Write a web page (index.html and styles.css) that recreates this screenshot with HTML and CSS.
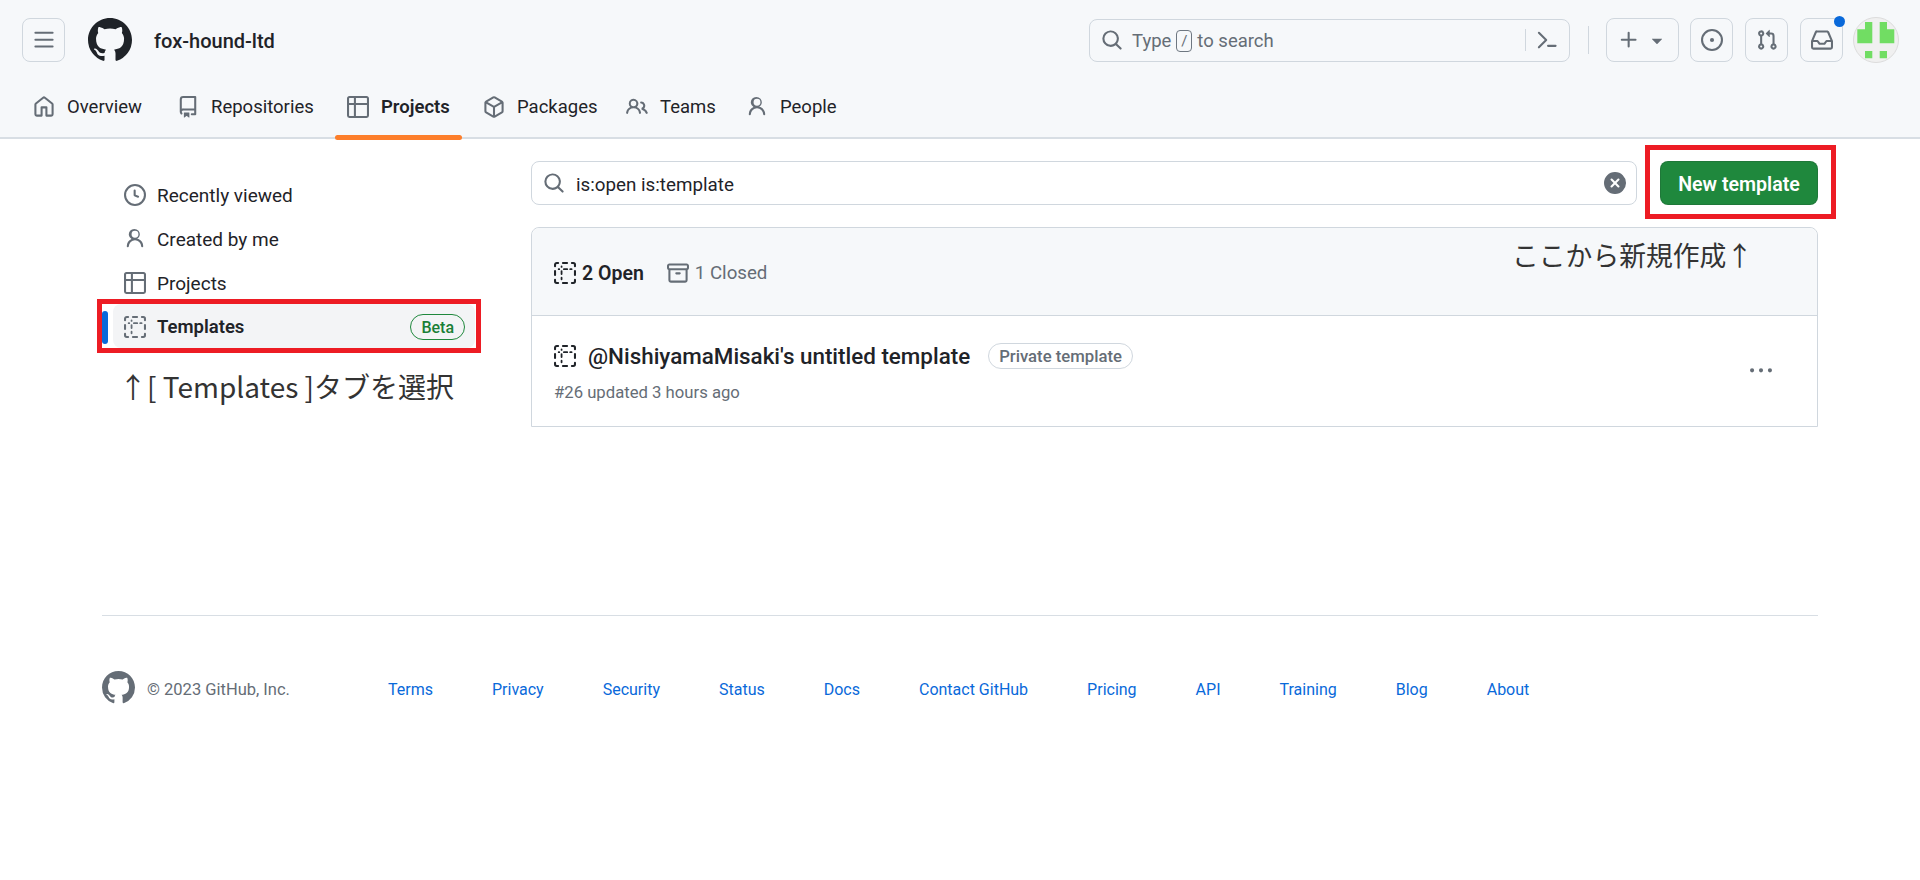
FILE: index.html
```html
<!DOCTYPE html>
<html lang="en">
<head>
<meta charset="utf-8">
<title>Projects · fox-hound-ltd</title>
<link rel="stylesheet" href="styles.css">
</head>
<body>
<svg class="sprite" aria-hidden="true">
  <symbol id="i-bars" viewBox="0 0 16 16"><path d="M1 2.75A.75.75 0 0 1 1.75 2h12.5a.75.75 0 0 1 0 1.5H1.75A.75.75 0 0 1 1 2.75Zm0 5A.75.75 0 0 1 1.75 7h12.5a.75.75 0 0 1 0 1.5H1.75A.75.75 0 0 1 1 7.75ZM1.75 12h12.5a.75.75 0 0 1 0 1.5H1.75a.75.75 0 0 1 0-1.5Z"/></symbol>
  <symbol id="i-mark" viewBox="0 0 16 16"><path d="M8 0c4.42 0 8 3.58 8 8a8.013 8.013 0 0 1-5.45 7.59c-.4.08-.55-.17-.55-.38 0-.27.01-1.13.01-2.2 0-.75-.25-1.23-.54-1.48 1.78-.2 3.65-.88 3.65-3.95 0-.88-.31-1.59-.82-2.15.08-.2.36-1.02-.08-2.12 0 0-.67-.22-2.2.82-.64-.18-1.32-.27-2-.27-.68 0-1.36.09-2 .27-1.53-1.03-2.2-.82-2.2-.82-.44 1.1-.16 1.92-.08 2.12-.51.56-.82 1.28-.82 2.15 0 3.06 1.86 3.75 3.64 3.95-.23.2-.44.55-.51 1.07-.46.21-1.61.55-2.33-.66-.15-.24-.6-.83-1.23-.82-.67.01-.27.38.01.53.34.19.73.9.82 1.13.16.45.68 1.31 2.69.94 0 .67.01 1.3.01 1.49 0 .21-.15.45-.55.38A7.995 7.995 0 0 1 0 8c0-4.42 3.58-8 8-8Z"/></symbol>
  <symbol id="i-home" viewBox="0 0 16 16"><path d="M6.906.664a1.749 1.749 0 0 1 2.187 0l5.25 4.2c.415.332.657.835.657 1.367v7.019A1.75 1.75 0 0 1 13.25 15h-3.5a.75.75 0 0 1-.75-.75V9H7v5.25a.75.75 0 0 1-.75.75h-3.5A1.75 1.75 0 0 1 1 13.25V6.23c0-.531.242-1.034.657-1.366l5.25-4.2Zm1.25 1.171a.25.25 0 0 0-.312 0l-5.25 4.2a.25.25 0 0 0-.094.196v7.019c0 .138.112.25.25.25H5.5V8.25a.75.75 0 0 1 .75-.75h3.5a.75.75 0 0 1 .75.75v5.25h2.75a.25.25 0 0 0 .25-.25V6.23a.25.25 0 0 0-.094-.195Z"/></symbol>
  <symbol id="i-repo" viewBox="0 0 16 16"><path d="M2 2.5A2.5 2.5 0 0 1 4.5 0h8.75a.75.75 0 0 1 .75.75v12.5a.75.75 0 0 1-.75.75h-2.5a.75.75 0 0 1 0-1.5h1.75v-2h-8a1 1 0 0 0-.714 1.7.75.75 0 1 1-1.072 1.05A2.495 2.495 0 0 1 2 11.5Zm10.5-1h-8a1 1 0 0 0-1 1v6.708A2.486 2.486 0 0 1 4.5 9h8ZM5 12.25a.25.25 0 0 1 .25-.25h3.5a.25.25 0 0 1 .25.25v3.25a.25.25 0 0 1-.4.2l-1.45-1.087a.249.249 0 0 0-.3 0L5.4 15.7a.25.25 0 0 1-.4-.2Z"/></symbol>
  <symbol id="i-table" viewBox="0 0 16 16"><path d="M0 1.75C0 .784.784 0 1.75 0h12.5C15.216 0 16 .784 16 1.75v12.5A1.75 1.75 0 0 1 14.25 16H1.75A1.75 1.75 0 0 1 0 14.25ZM6.5 6.5v8h7.75a.25.25 0 0 0 .25-.25V6.5Zm8-1.5V1.75a.25.25 0 0 0-.25-.25H6.5V5Zm-13 1.5v7.75c0 .138.112.25.25.25H5v-8ZM5 5V1.5H1.75a.25.25 0 0 0-.25.25V5Z"/></symbol>
  <symbol id="i-package" viewBox="0 0 16 16"><path d="m8.878.392 5.25 3.045c.54.314.872.89.872 1.514v6.098a1.75 1.75 0 0 1-.872 1.514l-5.25 3.045a1.75 1.75 0 0 1-1.756 0l-5.25-3.045A1.75 1.75 0 0 1 1 11.049V4.951c0-.624.332-1.201.872-1.514L7.122.392a1.75 1.75 0 0 1 1.756 0ZM7.875 1.69l-4.63 2.685L8 7.133l4.755-2.758-4.63-2.685a.248.248 0 0 0-.25 0ZM2.5 5.677v5.372c0 .09.047.171.125.216l4.625 2.683V8.432Zm6.25 8.271 4.625-2.683a.25.25 0 0 0 .125-.216V5.677L8.75 8.432Z"/></symbol>
  <symbol id="i-people" viewBox="0 0 16 16"><path d="M2 5.5a3.5 3.5 0 1 1 5.898 2.549 5.508 5.508 0 0 1 3.034 4.084.75.75 0 1 1-1.482.235 4 4 0 0 0-7.9 0 .75.75 0 0 1-1.482-.236A5.507 5.507 0 0 1 3.102 8.05 3.493 3.493 0 0 1 2 5.5ZM11 4a3.001 3.001 0 0 1 2.22 5.018 5.01 5.01 0 0 1 2.56 3.012.749.749 0 0 1-.885.954.752.752 0 0 1-.549-.514 3.507 3.507 0 0 0-2.522-2.372.75.75 0 0 1-.574-.73v-.352a.75.75 0 0 1 .416-.672A1.5 1.5 0 0 0 11 5.5.75.75 0 0 1 11 4Zm-5.5-.5a2 2 0 1 0-.001 3.999A2 2 0 0 0 5.5 3.5Z"/></symbol>
  <symbol id="i-person" viewBox="0 0 16 16"><path d="M10.561 8.073a6.005 6.005 0 0 1 3.432 5.142.75.75 0 1 1-1.498.07 4.5 4.5 0 0 0-8.99 0 .75.75 0 0 1-1.498-.07 6.004 6.004 0 0 1 3.431-5.142 3.999 3.999 0 1 1 4.123 0ZM10.5 4.5a2.5 2.5 0 1 0-5 0 2.5 2.5 0 0 0 5 0Z"/></symbol>
  <symbol id="i-search" viewBox="0 0 16 16"><path d="M10.68 11.74a6 6 0 0 1-7.922-8.982 6 6 0 0 1 8.982 7.922l3.04 3.04a.749.749 0 0 1-.326 1.275.749.749 0 0 1-.734-.215ZM11.5 7a4.499 4.499 0 1 0-8.997 0A4.499 4.499 0 0 0 11.5 7Z"/></symbol>
  <symbol id="i-command" viewBox="0 0 16 16"><path d="m6.354 8.04-4.773 4.773a.75.75 0 1 0 1.061 1.06L7.945 8.57a.75.75 0 0 0 0-1.06L2.642 2.206a.75.75 0 0 0-1.06 1.061L6.353 8.04ZM8.75 11.5a.75.75 0 0 0 0 1.5h5.5a.75.75 0 0 0 0-1.5h-5.5Z"/></symbol>
  <symbol id="i-plus" viewBox="0 0 16 16"><path d="M7.75 2a.75.75 0 0 1 .75.75V7h4.25a.75.75 0 0 1 0 1.5H8.5v4.25a.75.75 0 0 1-1.5 0V8.5H2.75a.75.75 0 0 1 0-1.5H7V2.75A.75.75 0 0 1 7.75 2Z"/></symbol>
  <symbol id="i-caret" viewBox="0 0 16 16"><path d="m4.427 7.427 3.396 3.396a.25.25 0 0 0 .354 0l3.396-3.396A.25.25 0 0 0 11.396 7H4.604a.25.25 0 0 0-.177.427Z"/></symbol>
  <symbol id="i-issue" viewBox="0 0 16 16"><path d="M8 9.5a1.5 1.5 0 1 0 0-3 1.5 1.5 0 0 0 0 3Z"/><path d="M8 0a8 8 0 1 1 0 16A8 8 0 0 1 8 0ZM1.5 8a6.5 6.5 0 1 0 13 0 6.5 6.5 0 0 0-13 0Z"/></symbol>
  <symbol id="i-pr" viewBox="0 0 16 16"><path d="M1.5 3.25a2.25 2.25 0 1 1 3 2.122v5.256a2.251 2.251 0 1 1-1.5 0V5.372A2.25 2.25 0 0 1 1.5 3.25Zm5.677-.177L9.573.677A.25.25 0 0 1 10 .854V2.5h1A2.5 2.5 0 0 1 13.5 5v5.628a2.251 2.251 0 1 1-1.5 0V5a1 1 0 0 0-1-1h-1v1.646a.25.25 0 0 1-.427.177L7.177 3.427a.25.25 0 0 1 0-.354ZM3.75 2.5a.75.75 0 1 0 0 1.5.75.75 0 0 0 0-1.5Zm0 9.5a.75.75 0 1 0 0 1.5.75.75 0 0 0 0-1.5Zm8.25.75a.75.75 0 1 0 1.5 0 .75.75 0 0 0-1.5 0Z"/></symbol>
  <symbol id="i-inbox" viewBox="0 0 16 16"><path d="M2.8 2.06A1.75 1.75 0 0 1 4.41 1h7.18c.7 0 1.333.417 1.61 1.06l2.74 6.395c.04.093.06.194.06.295v4.5A1.75 1.75 0 0 1 14.25 15H1.75A1.75 1.75 0 0 1 0 13.25v-4.5c0-.101.02-.202.06-.295Zm1.61.44a.25.25 0 0 0-.23.152L1.887 8H4.75a.75.75 0 0 1 .6.3L6.625 10h2.75l1.275-1.7a.75.75 0 0 1 .6-.3h2.863L11.82 2.652a.25.25 0 0 0-.23-.152Zm10.09 7h-2.875l-1.275 1.7a.75.75 0 0 1-.6.3h-3.5a.75.75 0 0 1-.6-.3L4.375 9.5H1.5v3.75c0 .138.112.25.25.25h12.5a.25.25 0 0 0 .25-.25Z"/></symbol>
  <symbol id="i-clock" viewBox="0 0 16 16"><path d="M8 0a8 8 0 1 1 0 16A8 8 0 0 1 8 0ZM1.5 8a6.5 6.5 0 1 0 13 0 6.5 6.5 0 0 0-13 0Zm7-3.25v2.992l2.028.812a.75.75 0 0 1-.557 1.392l-2.5-1A.751.751 0 0 1 7 8.25v-3.5a.75.75 0 0 1 1.5 0Z"/></symbol>
  <symbol id="i-template" viewBox="0 0 16 16"><path fill="none" stroke="currentColor" stroke-width="1.5" stroke-linecap="round" d="M.75 3V2A1.25 1.25 0 0 1 2 .75h1M6.5.75h3M13 .75h1A1.25 1.25 0 0 1 15.25 2v1M15.25 6.5v3M15.25 13v1A1.25 1.25 0 0 1 14 15.25h-1M9.5 15.25h-3M3 15.25H2A1.25 1.25 0 0 1 .75 14v-1M.75 9.5v-3"/><path fill="none" stroke="currentColor" stroke-width="1.3" stroke-linecap="round" d="M5.5 3.2v.4M5.5 6.6v2.2M5.5 11.4v1.2M3.4 5.25h.4M7.2 5.25h2.4M11.8 5.25h1"/></symbol>
  <symbol id="i-archive" viewBox="0 0 16 16"><path d="M0 2.75C0 1.784.784 1 1.75 1h12.5c.966 0 1.75.784 1.75 1.75v1.5A1.75 1.75 0 0 1 15 5.86v7.39A1.75 1.75 0 0 1 13.25 15h-10.5A1.75 1.75 0 0 1 1 13.25V5.86A1.75 1.75 0 0 1 0 4.25ZM1.75 2.5a.25.25 0 0 0-.25.25v1.5c0 .138.112.25.25.25h12.5a.25.25 0 0 0 .25-.25v-1.5a.25.25 0 0 0-.25-.25ZM2.5 6v7.25c0 .138.112.25.25.25h10.5a.25.25 0 0 0 .25-.25V6ZM6 8.25A.75.75 0 0 1 6.75 7.5h2.5a.75.75 0 0 1 0 1.5h-2.5A.75.75 0 0 1 6 8.25Z"/></symbol>
  <symbol id="i-xfill" viewBox="0 0 16 16"><path d="M2.343 13.657A8 8 0 1 1 13.658 2.343 8 8 0 0 1 2.343 13.657ZM6.03 4.97a.751.751 0 0 0-1.042.018.751.751 0 0 0-.018 1.042L6.94 8 4.97 9.97a.749.749 0 0 0 .326 1.275.749.749 0 0 0 .734-.215L8 9.06l1.97 1.97a.749.749 0 0 0 1.275-.326.749.749 0 0 0-.215-.734L9.06 8l1.97-1.97a.749.749 0 0 0-.326-1.275.749.749 0 0 0-.734.215L8 6.94Z"/></symbol>
  <symbol id="i-kebab" viewBox="0 0 16 16"><path d="M8 9a1.5 1.5 0 1 0 0-3 1.5 1.5 0 0 0 0 3ZM1.5 9a1.5 1.5 0 1 0 0-3 1.5 1.5 0 0 0 0 3Zm13 0a1.5 1.5 0 1 0 0-3 1.5 1.5 0 0 0 0 3Z"/></symbol>
</svg>

<header class="top">
  <div class="top-row">
    <button class="icon-btn bars-btn"><svg class="ic ic-22 muted"><use href="#i-bars"/></svg></button>
    <svg class="logo"><use href="#i-mark"/></svg>
    <span class="org">fox-hound-ltd</span>
    <div class="global-search">
      <svg class="ic ic-22 muted"><use href="#i-search"/></svg>
      <span class="gs-text"><span>Type</span><kbd class="slash">/</kbd><span>to search</span></span>
      <span class="gs-sep"></span>
      <svg class="ic ic-22 muted"><use href="#i-command"/></svg>
    </div>
    <span class="top-sep"></span>
    <button class="icon-btn plus-btn"><svg class="ic ic-22 muted"><use href="#i-plus"/></svg><svg class="ic ic-22 muted"><use href="#i-caret"/></svg></button>
    <button class="icon-btn"><svg class="ic ic-22 muted"><use href="#i-issue"/></svg></button>
    <button class="icon-btn"><svg class="ic ic-22 muted"><use href="#i-pr"/></svg></button>
    <button class="icon-btn inbox"><svg class="ic ic-22 muted"><use href="#i-inbox"/></svg><span class="dot"></span></button>
    <span class="avatar">
      <svg viewBox="1 1 44 44" class="identicon">
        <path d="M4.3 12.3H12V5h7.3v21.3H4.3Z"/>
        <path d="M26.7 5H34v7.3h7.3v14H26.7Z"/>
        <path d="M12 34h7.3v7.3H12ZM26.7 34H34v7.3h-7.3Z"/>
      </svg>
    </span>
  </div>
  <nav class="tabs">
    <a class="tab"><svg class="ic ic-22 muted"><use href="#i-home"/></svg>Overview</a>
    <a class="tab"><svg class="ic ic-22 muted"><use href="#i-repo"/></svg>Repositories</a>
    <a class="tab tab-on"><svg class="ic ic-22 muted"><use href="#i-table"/></svg>Projects</a>
    <a class="tab"><svg class="ic ic-22 muted"><use href="#i-package"/></svg>Packages</a>
    <a class="tab"><svg class="ic ic-22 muted"><use href="#i-people"/></svg>Teams</a>
    <a class="tab"><svg class="ic ic-22 muted"><use href="#i-person"/></svg>People</a>
  </nav>
</header>

<main class="page">
  <aside class="side">
    <a class="side-item"><svg class="ic ic-22 muted"><use href="#i-clock"/></svg>Recently viewed</a>
    <a class="side-item"><svg class="ic ic-22 muted"><use href="#i-person"/></svg>Created by me</a>
    <a class="side-item"><svg class="ic ic-22 muted"><use href="#i-table"/></svg>Projects</a>
    <a class="side-item side-on"><svg class="ic ic-22 muted"><use href="#i-template"/></svg>Templates<span class="beta">Beta</span><span class="redbox redbox-side"></span></a>
    <p class="note note-side">↑[ Templates ]タブを選択</p>
  </aside>
  <section class="content">
    <div class="filter-row">
      <div class="filter">
        <svg class="ic ic-22 muted"><use href="#i-search"/></svg>
        <span class="filter-text">is:open is:template</span>
        <svg class="ic ic-22 clear"><use href="#i-xfill"/></svg>
      </div>
      <button class="primary">New template<span class="redbox redbox-btn"></span></button>
    </div>
    <div class="box">
      <div class="box-head">
        <span class="state state-on"><svg class="ic ic-22 dark"><use href="#i-template"/></svg>2 Open</span>
        <span class="state"><svg class="ic ic-22 muted"><use href="#i-archive"/></svg>1 Closed</span>
        <p class="note note-box">ここから新規作成↑</p>
      </div>
      <div class="box-row">
        <div class="row-main">
          <div class="row-title">
            <svg class="ic ic-22 dark"><use href="#i-template"/></svg>
            <span class="title-text">@NishiyamaMisaki's untitled template</span>
            <span class="pill">Private template</span>
          </div>
          <div class="row-meta">#26 updated 3 hours ago</div>
        </div>
        <svg class="ic ic-22 muted kebab"><use href="#i-kebab"/></svg>
      </div>
    </div>
  </section>
</main>

<footer class="foot">
  <div class="foot-in">
    <svg class="foot-logo"><use href="#i-mark"/></svg>
    <span class="copy">© 2023 GitHub, Inc.</span>
    <div class="links">
      <a>Terms</a><a>Privacy</a><a>Security</a><a>Status</a><a>Docs</a><a>Contact GitHub</a><a>Pricing</a><a>API</a><a>Training</a><a>Blog</a><a>About</a>
    </div>
  </div>
</footer>
</body>
</html>
```

FILE: styles.css
```css
* { box-sizing: border-box; }
html, body { margin: 0; padding: 0; }
body {
  background: #fff;
  color: #1f2328;
  font-family: Roboto, "Noto Sans CJK JP", sans-serif;
  font-size: 19px;
  height: 880px;
  overflow: hidden;
}
.sprite { display: none; }
.ic { flex: none; fill: currentColor; display: block; }
.ic-22 { width: 22px; height: 22px; }
.muted { color: #656d76; }
.dark { color: #1f2328; }

/* header */
.top {
  height: 139px;
  background: #f6f8fa;
  border-bottom: 2px solid #d8dee4;
  padding-top: 18px;
}
.top-row {
  display: flex;
  align-items: center;
  height: 44px;
  padding: 0 21px 0 22px;
}
.icon-btn {
  position: relative;
  width: 43px;
  height: 44px;
  display: flex;
  align-items: center;
  justify-content: center;
  background: transparent;
  border: 1px solid #d0d7de;
  border-radius: 8px;
  padding: 0;
  margin-right: 12px;
  flex: none;
}
.bars-btn { margin-right: 0; }
.logo { width: 44px; height: 44px; margin-left: 23px; fill: #1f2328; flex: none; }
.org { margin-left: 22px; padding-top: 2px; font-size: 20px; font-weight: 500; flex: 1; }
.global-search {
  width: 481px;
  height: 43px;
  border: 1px solid #d0d7de;
  border-radius: 8px;
  display: flex;
  align-items: center;
  padding: 0 11px;
  color: #656d76;
  flex: none;
}
.gs-text { margin-left: 9px; padding-top: 1px; flex: 1; font-size: 18.5px; color: #656d76; display: flex; align-items: center; gap: 5px; }
.slash {
  display: inline-flex;
  align-items: center;
  justify-content: center;
  width: 16px;
  height: 22px;
  border: 1px solid #6e7781;
  border-radius: 4px;
  font: inherit;
  font-size: 15px;
}
.gs-sep { width: 1px; height: 22px; background: #d0d7de; margin-right: 10px; }
.top-sep { width: 1px; height: 28px; background: #d0d7de; margin: 0 17px 0 18px; flex: none; }
.plus-btn { width: 73px; gap: 6px; margin-right: 11px; }
.dot {
  position: absolute;
  top: -3px;
  right: -3px;
  width: 11px;
  height: 11px;
  border-radius: 50%;
  background: #0969da;
}
.inbox { margin-right: 10px; }
.avatar {
  width: 46px;
  height: 46px;
  border-radius: 50%;
  background: #f0f0f0;
  border: 1px solid #dcdcdc;
  flex: none;
  overflow: hidden;
}
.identicon { display: block; width: 44px; height: 44px; fill: #71dd63; }

.tabs {
  display: grid;
  grid-template-columns: 145px 170px 135px 143px 120px auto;
  justify-items: start;
  height: 75px;
  padding-left: 21px;
}
.tab {
  position: relative;
  display: flex;
  align-items: center;
  gap: 12px;
  padding: 15px 12px 0;
  font-size: 18.5px;
  color: #1f2328;
  height: 75px;
}
.tab:nth-child(2) { margin-left: -1px; }
.tab-on { font-weight: 600; margin-left: -1px; }
.tab-on::after {
  content: "";
  position: absolute;
  left: 0;
  right: 0;
  bottom: -3px;
  height: 5px;
  border-radius: 3px;
  background: #fd7e2a;
}

/* main */
.page { display: flex; padding: 22px 102px 0; height: 476px; }
.side { width: 429px; flex: none; padding-top: 11px; }
.side-item {
  position: relative;
  display: flex;
  align-items: center;
  height: 44px;
  gap: 11px;
  padding: 2px 10px 0 22px;
  color: #1f2328;
  font-size: 19px;
  width: 373px;
}
.side-on { background: #f3f4f6; border-radius: 8px; font-weight: 600; font-size: 18.5px; left: 11px; padding-left: 11px; width: 362px; }
.side-on::before {
  content: "";
  position: absolute;
  left: -11px;
  top: 7px;
  width: 6px;
  height: 33px;
  border-radius: 3px;
  background: #0969da;
}
.beta {
  margin-left: auto;
  height: 26px;
  padding: 0 10px;
  display: flex;
  align-items: center;
  border: 1px solid #1f883d;
  border-radius: 13px;
  color: #1a7f37;
  font-size: 16px;
  font-weight: 500;
}
.redbox { position: absolute; border: 5px solid #ed1c24; pointer-events: none; }
.redbox-side { left: -16px; right: -6px; top: -5px; bottom: -5px; }
.note {
  margin: 0;
  color: #333;
  font-family: "Noto Sans CJK JP", sans-serif;
  font-size: 28px;
  line-height: 40px;
  white-space: nowrap;
}
.note-side { margin: 18px 0 0 17px; }
.note-box { position: absolute; left: 980px; top: 7px; font-size: 26.8px; }

.content { flex: 1; min-width: 0; }
.filter-row { display: flex; gap: 23px; }
.filter {
  flex: 1;
  height: 44px;
  border: 1px solid #d0d7de;
  border-radius: 8px;
  display: flex;
  align-items: center;
  padding: 0 10px 0 11px;
}
.filter-text { flex: 1; margin-left: 11px; padding-top: 4px; font-size: 18.8px; color: #1f2328; }
.clear { color: #656d76; }
.primary {
  position: relative;
  width: 158px;
  height: 44px;
  background: #1f883d;
  border: 1px solid rgba(31,35,40,.15);
  border-radius: 8px;
  color: #fff;
  font: inherit;
  font-size: 19.6px;
  font-weight: 600;
  padding: 2px 0 0;
}
.redbox-btn { left: -16px; right: -19px; top: -17px; bottom: -15px; }

.box {
  margin-top: 22px;
  border: 1px solid #d0d7de;
  border-radius: 8px 8px 0 0;
  height: 200px;
}
.box-head {
  position: relative;
  height: 88px;
  background: #f6f8fa;
  border-bottom: 1px solid #d0d7de;
  border-radius: 8px 8px 0 0;
  display: flex;
  align-items: center;
  padding: 3px 0 0 22px;
  gap: 23px;
}
.state { display: flex; align-items: center; gap: 6px; color: #656d76; font-size: 18.7px; }
.state-on { color: #1f2328; font-weight: 600; font-size: 19.5px; }
.box-row { display: flex; align-items: center; height: 110px; padding: 0 45px 0 22px; }
.row-main { flex: 1; padding-top: 4px; }
.row-title { display: flex; align-items: center; height: 26px; margin-top: 2px; }
.title-text { margin-left: 12px; font-size: 22.4px; font-weight: 500; color: #1f2328; }
.pill {
  margin-left: 18px;
  height: 26px;
  padding: 0 10px;
  display: flex;
  align-items: center;
  border: 1px solid #d0d7de;
  border-radius: 13px;
  color: #656d76;
  font-size: 16.7px;
  font-weight: 500;
}
.row-meta { margin-top: 12px; color: #656d76; font-size: 16.7px; line-height: 24px; }

/* footer */
.foot { padding: 0 102px; }
.foot-in {
  border-top: 1px solid #d8dee4;
  height: 150px;
  padding-top: 55px;
  display: flex;
  align-items: flex-start;
}
.foot-logo { width: 33px; height: 33px; fill: #656d76; flex: none; }
.copy { margin-left: 11px; padding: 1px 0 0 1px; color: #656d76; font-size: 16.5px; line-height: 35px; width: 242px; flex: none; }
.links { display: flex; gap: 59px; padding-top: 1px; font-size: 16px; line-height: 35px; color: #0969da; }
```
